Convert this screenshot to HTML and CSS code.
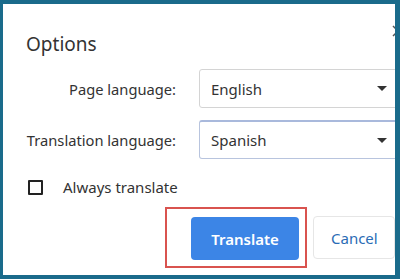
FILE: index.html
```html
<!DOCTYPE html>
<html lang="en">
<head>
    <meta charset="UTF-8">
    <meta name="viewport" content="width=device-width, initial-scale=1.0">
    <title>Options</title>
    <link rel="stylesheet" href="styles.css">
</head>
<body>
    <div class="window">
        <div class="dialog">
            <div class="head">
                <h1 class="title">Options</h1>
                <svg class="close" width="12" height="12" viewBox="0 0 12 12">
                    <path d="M1 1 L11 11 M11 1 L1 11" stroke="#555" stroke-width="1.5"/>
                </svg>
            </div>

            <div class="fields">
                <span class="label">Page language:</span>
                <div class="select"><span>English</span><span class="caret"></span></div>
                <span class="label">Translation language:</span>
                <div class="select focused"><span>Spanish</span><span class="caret"></span></div>
            </div>

            <div class="check-row">
                <span class="box"></span>
                <span>Always translate</span>
            </div>

            <div class="actions">
                <div class="highlight">
                    <button class="btn primary">Translate</button>
                </div>
                <button class="btn secondary">Cancel</button>
            </div>
        </div>
    </div>
</body>
</html>
```

FILE: styles.css
```css
body {
    margin: 0;
    font-family: 'Noto Sans', 'Open Sans', sans-serif;
    color: #333;
}

.window {
    width: 400px;
    height: 279px;
    box-sizing: border-box;
    background-color: #1a6b8b;
    padding: 4px 5px 4px 3px;
}

.dialog {
    height: 100%;
    background-color: #fff;
    overflow: hidden;
    position: relative;
}

.head {
    padding: 28px 0 0 23px;
}

.title {
    margin: 0;
    font-size: 19px;
    font-weight: 400;
    line-height: 24px;
}

.close {
    position: absolute;
    top: 21px;
    right: -9px;
}

.fields {
    display: grid;
    grid-template-columns: 173px 200px;
    column-gap: 23px;
    row-gap: 12px;
    align-items: center;
    margin-top: 13px;
}

.label {
    text-align: right;
    font-size: 14.7px;
}

.select {
    height: 39px;
    box-sizing: border-box;
    border: 1px solid #d4d4d4;
    border-radius: 3px;
    display: flex;
    align-items: center;
    justify-content: space-between;
    padding: 0 11px;
    font-size: 15px;
}

.select.focused {
    border-color: #b8c4de;
    border-top: 2px solid #a9b9dc;
}

.caret {
    width: 0;
    height: 0;
    border-left: 5px solid transparent;
    border-right: 5px solid transparent;
    border-top: 5px solid #333;
}

.check-row {
    display: flex;
    align-items: center;
    gap: 20px;
    margin: 18px 0 0 25px;
    font-size: 15px;
}

.box {
    width: 15px;
    height: 15px;
    box-sizing: border-box;
    border: 2px solid #222;
    border-radius: 1px;
}

.actions {
    display: flex;
    align-items: center;
    margin: 10px 0 0 162px;
}

.highlight {
    border: 2px solid #d9534f;
    padding: 8px 6px 6px 24px;
}

.btn {
    font-family: inherit;
    font-size: 15px;
    cursor: pointer;
}

.primary {
    width: 108px;
    height: 43px;
    background-color: #3c85e6;
    color: #fff;
    font-weight: 600;
    border: none;
    border-radius: 4px;
}

.secondary {
    height: 43px;
    width: 120px;
    margin-left: 6px;
    background-color: #fff;
    color: #2b6cb5;
    border: 1px solid #e6e6e6;
    border-radius: 4px;
    text-align: left;
    padding-left: 17px;
}
```
